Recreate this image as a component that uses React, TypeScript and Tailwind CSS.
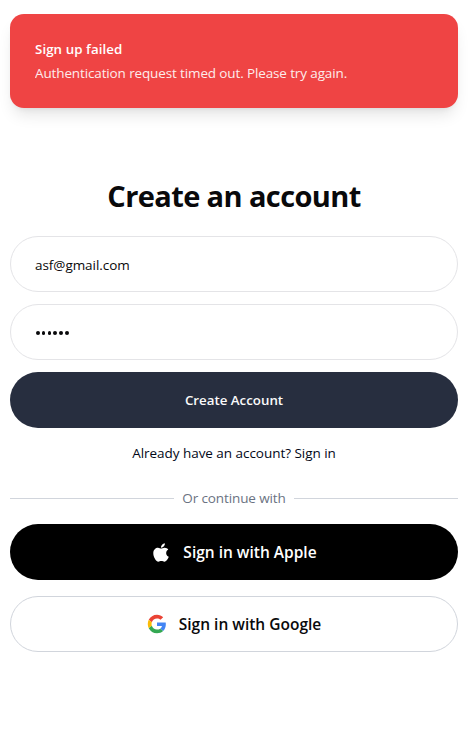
import React from "react";

function AppleLogo() {
  return (
    <svg viewBox="0 0 384 512" className="h-[21px] w-5 shrink-0" fill="#fff" aria-hidden="true">
      <path d="M318.7 268.7c-.2-36.7 16.4-64.4 50-84.8-18.8-26.9-47.2-41.7-84.7-44.6-35.5-2.8-74.3 20.7-88.5 20.7-15 0-49.4-19.7-76.4-19.7C63.3 141.2 4 184.8 4 273.5q0 39.3 14.4 81.2c12.8 36.7 59 126.7 107.2 125.2 25.2-.6 43-17.9 75.8-17.9 31.8 0 48.3 17.9 76.4 17.9 48.6-.7 90.4-82.5 102.6-119.3-65.2-30.7-61.7-90-61.7-91.9zm-56.6-164.2c27.3-32.4 24.8-61.9 24-72.5-24.1 1.4-52 16.4-67.9 34.9-17.5 19.8-27.8 44.3-25.6 71.9 26.1 2 49.9-11.4 69.5-34.3z" />
    </svg>
  );
}

function GoogleLogo() {
  return (
    <svg viewBox="-2 -2 52 52" className="h-5 w-5 shrink-0" aria-hidden="true">
      <path fill="#EA4335" d="M24 9.5c3.54 0 6.71 1.22 9.21 3.6l6.85-6.85C35.9 2.38 30.47 0 24 0 14.62 0 6.51 5.38 2.56 13.22l7.98 6.19C12.43 13.72 17.74 9.5 24 9.5z" />
      <path fill="#4285F4" d="M46.98 24.55c0-1.57-.15-3.09-.38-4.55H24v9.02h12.94c-.58 2.96-2.26 5.48-4.78 7.18l7.73 6c4.51-4.18 7.09-10.36 7.09-17.65z" />
      <path fill="#FBBC05" d="M10.53 28.59c-.48-1.45-.76-2.99-.76-4.59s.27-3.14.76-4.59l-7.98-6.19C.92 16.46 0 20.12 0 24c0 3.88.92 7.54 2.56 10.78l7.97-6.19z" />
      <path fill="#34A853" d="M24 48c6.48 0 11.93-2.13 15.89-5.81l-7.73-6c-2.15 1.45-4.92 2.3-8.16 2.3-6.26 0-11.57-4.22-13.47-9.91l-7.98 6.19C6.51 42.62 14.62 48 24 48z" />
    </svg>
  );
}

export default function App() {
  return (
    <main className="min-h-[753px] bg-white pt-3.5 pr-3 pl-2.5 font-['Open_Sans','Noto_Sans',sans-serif] text-[#09090b]">
      <div role="alert" className="flex h-[94px] flex-col gap-1 rounded-[14px] bg-[#ef4444] px-[25px] pt-[25px] text-white shadow-lg">
        <p className="text-[13.3px] leading-5 font-semibold tracking-[0.07px]"><span>Sign up failed</span></p>
        <p className="text-[13.5px] leading-5 tracking-[-0.13px] opacity-90"><span>Authentication request timed out. Please try again.</span></p>
      </div>

      <h1 className="mt-[70px] text-center text-[29px] leading-9 font-bold tracking-[-0.6px]"><span>Create an account</span></h1>

      <form className="mt-[22px] flex flex-col gap-3" onSubmit={(e) => e.preventDefault()}>
        <div className="flex h-14 items-center rounded-full border border-[#e4e4e7] px-6 pt-0.5 text-[13.5px] tracking-[-0.05px]">
          <span>asf@gmail.com</span>
        </div>
        <div className="flex h-14 items-center gap-[2.2px] rounded-full border border-[#e4e4e7] px-[25px] pt-0.5">
          {[0, 1, 2, 3, 4, 5].map((i) => (
            <i key={i} className="size-[3.6px] rounded-full bg-[#09090b]" />
          ))}
        </div>
        <button className="h-14 rounded-full bg-[#272e3f] pt-0.5 text-[13.3px] font-semibold text-[#fafafa]"><span>Create Account</span></button>
      </form>

      <p className="mt-[15px] text-center text-[13.5px] leading-5 tracking-[-0.04px] text-[#020817]"><span>Already have an account? Sign in</span></p>

      <div className="mt-[25px] flex h-5 items-center gap-2 text-[13.5px] tracking-[-0.12px] text-gray-500">
        <hr className="flex-1 border-gray-300" />
        <span>Or continue with</span>
        <hr className="flex-1 border-gray-300" />
      </div>

      <div className="mt-4 flex flex-col gap-4 text-[15.5px] font-semibold">
        <button className="flex h-14 items-center justify-center gap-3 rounded-full bg-black text-white">
          <AppleLogo /><span className="pt-0.5">Sign in with Apple</span>
        </button>
        <button className="flex h-14 items-center justify-center gap-3 rounded-full border border-gray-300 bg-white">
          <GoogleLogo /><span className="pt-0.5">Sign in with Google</span>
        </button>
      </div>
    </main>
  );
}
